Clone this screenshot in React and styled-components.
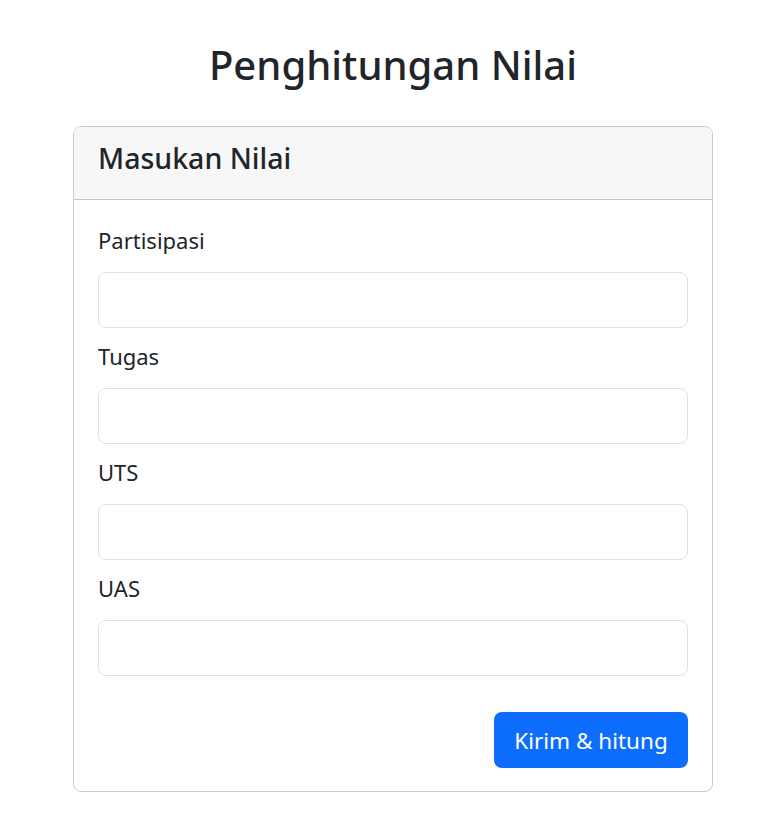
import styled, { createGlobalStyle } from 'styled-components';

const Global = createGlobalStyle`
  body {
    margin: 0;
    background: #fff;
    color: #212529;
    font-family: "Noto Sans", "Open Sans", sans-serif;
  }
`;

const Page = styled.div`
  width: 640px;
  margin-left: 73px;
  padding-top: 35px;
`;

const Title = styled.h1`
  margin: 0 0 31px;
  font-size: 40px;
  font-weight: 500;
  line-height: 60px;
  text-align: center;
`;

const Card = styled.div`
  box-sizing: border-box;
  width: 640px;
  border: 1px solid rgba(0, 0, 0, 0.2);
  border-radius: 8px;
  overflow: hidden;
`;

const CardHeader = styled.div`
  height: 58px;
  padding: 14px 24px 0;
  background: #f7f7f7;
  border-bottom: 1px solid rgba(0, 0, 0, 0.2);
  font-size: 28.5px;
  font-weight: 500;
  line-height: 1.2;
`;

const CardBody = styled.form`
  padding: 25px 24px 23px;
`;

const Group = styled.div`
  margin-bottom: 13px;
`;

const Label = styled.label`
  display: block;
  font-size: 22px;
  line-height: 30px;
  margin-bottom: 17px;
`;

const Input = styled.input`
  display: block;
  box-sizing: border-box;
  width: 100%;
  height: 56px;
  border: 1px solid #dee2e6;
  border-radius: 8px;
  padding: 0 16px;
  font: inherit;
  font-size: 20px;
`;

const Actions = styled.div`
  display: flex;
  justify-content: flex-end;
  margin-top: 36px;
`;

const Button = styled.button`
  width: 194px;
  height: 56px;
  padding: 0;
  border: 0;
  border-radius: 8px;
  background: #0d6efd;
  color: #fff;
  font-family: inherit;
  font-size: 22.5px;
`;

const fields = ['Partisipasi', 'Tugas', 'UTS', 'UAS'];

const App = () => {
  return (
    <>
      <Global />
      <Page>
        <Title>Penghitungan Nilai</Title>
        <Card>
          <CardHeader>Masukan Nilai</CardHeader>
          <CardBody onSubmit={(e) => e.preventDefault()}>
            {fields.map((f) => (
              <Group key={f}>
                <Label>{f}</Label>
                <Input type="number" />
              </Group>
            ))}
            <Actions>
              <Button type="submit">Kirim &amp; hitung</Button>
            </Actions>
          </CardBody>
        </Card>
      </Page>
    </>
  );
};

export default App;
